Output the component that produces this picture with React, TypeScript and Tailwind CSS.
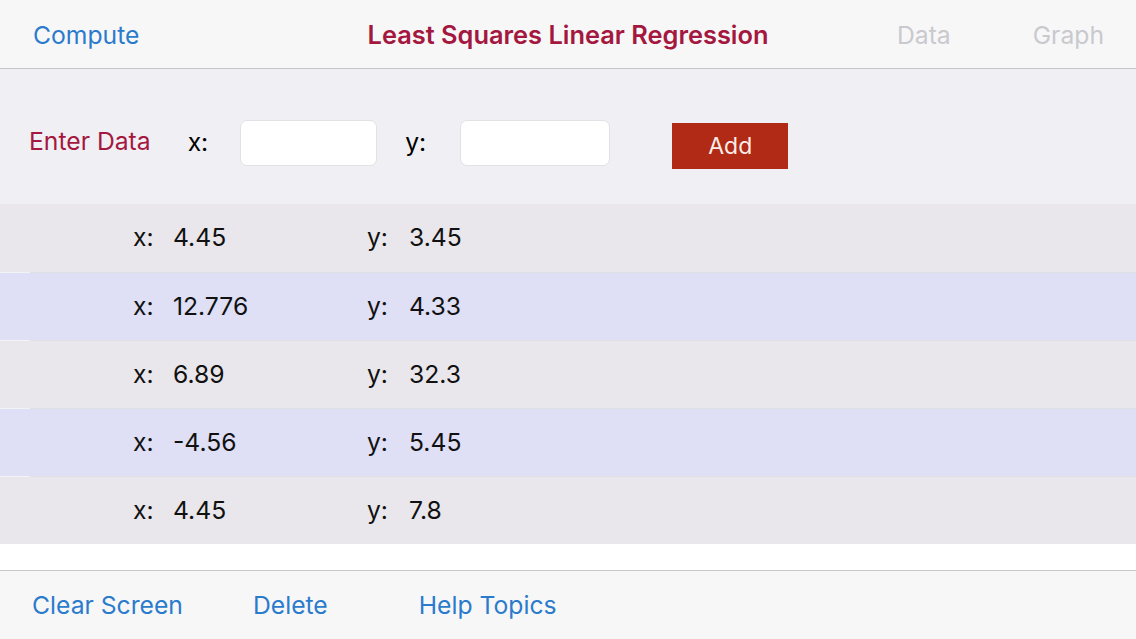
import React from "react";

const rows = [
  { x: "4.45", y: "3.45" },
  { x: "12.776", y: "4.33" },
  { x: "6.89", y: "32.3" },
  { x: "-4.56", y: "5.45" },
  { x: "4.45", y: "7.8" },
];

function Sep() {
  return (
    <div className="flex h-px shrink-0">
      <div className="w-[30px] bg-[#f3f3f6]" />
      <div className="flex-1 bg-[#e0dfe6]" />
    </div>
  );
}

export default function App() {
  return (
    <div
      className="w-[1136px] h-[639px] flex flex-col bg-white overflow-hidden"
      style={{ fontFamily: "Inter, 'Liberation Sans', sans-serif" }}
    >
      {/* top bar */}
      <div className="h-[69px] shrink-0 bg-[#f7f7f8] border-b border-[#c4c4c8] grid grid-cols-[1fr_auto_1fr] items-center px-[32px] pt-[3px] text-[24.7px]">
        <span className="text-[#2b7bcc] pl-[1px]">Compute</span>
        <span className="text-[#a4173f] font-semibold text-[25.4px]">Least Squares Linear Regression</span>
        <div className="flex justify-end gap-[82px] text-[#c9c9ce]">
          <span>Data</span>
          <span>Graph</span>
        </div>
      </div>

      {/* entry */}
      <div className="h-[135px] shrink-0 bg-[#efeff4] flex items-center text-[24.7px] pt-[13px]">
        <span className="text-[#a4173f] ml-[29px] mt-[-2px]">Enter Data</span>
        <span className="text-black ml-[37px]">x:</span>
        <div className="ml-[32px] w-[137px] h-[46px] bg-white rounded-[7px] border border-[#e2e2e6]" />
        <span className="text-black ml-[28px]">y:</span>
        <div className="ml-[34px] w-[150px] h-[46px] bg-white rounded-[7px] border border-[#e2e2e6]" />
        <button className="ml-[62px] mt-[6px] w-[116px] h-[46px] bg-[#b12a15] text-[#fbeee9] text-[23px]">
          Add
        </button>
      </div>

      {/* rows */}
      <div className="flex flex-col">
        {rows.map((r, i) => (
          <div key={i} className={i % 2 === 0 ? "bg-[#e9e7eb]" : "bg-[#dfdff5]"}>
            {i > 0 && <Sep />}
            <div
              className={`flex items-center text-[24.7px] text-[#111] pl-[133px] ${
                i > 0 ? "h-[67px]" : "h-[68px]"
              }`}
            >
              <span className="w-[40px]">x:</span>
              <span className="w-[194px]">{r.x}</span>
              <span className="w-[42px]">y:</span>
              <span>{r.y}</span>
            </div>
          </div>
        ))}
      </div>

      <div className="flex-1 bg-white" />

      {/* bottom bar */}
      <div className="h-[69px] shrink-0 bg-[#f7f7f8] border-t border-[#c9c9cd] flex items-center text-[24.7px] text-[#2b7bcc] pl-[32px] pt-[1px]">
        <span>Clear Screen</span>
        <span className="ml-[70px]">Delete</span>
        <span className="ml-[91px]">Help Topics</span>
      </div>
    </div>
  );
}
